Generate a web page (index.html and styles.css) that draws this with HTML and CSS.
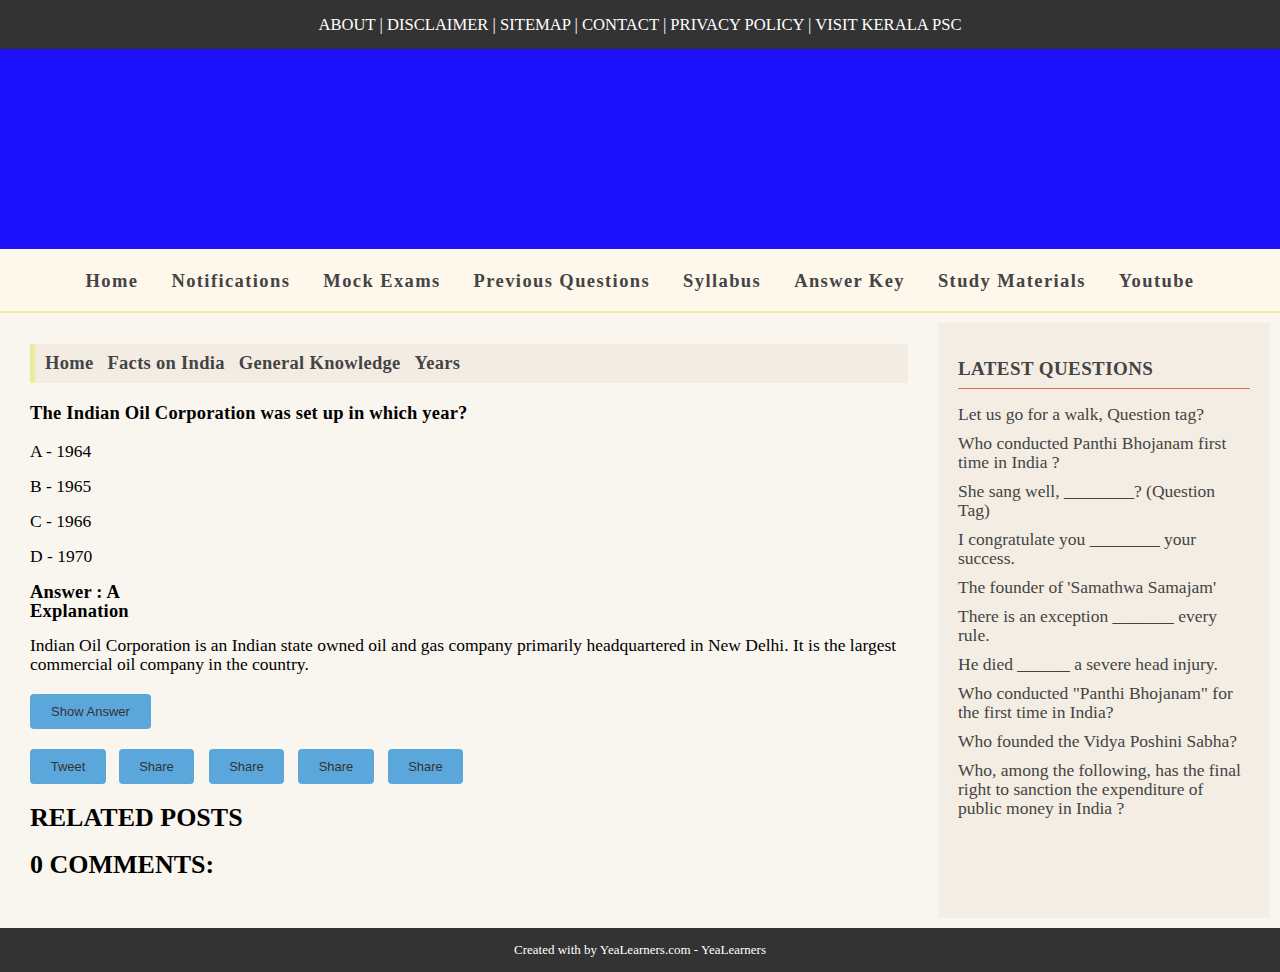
FILE: index.html
```html
<!DOCTYPE html>
<html lang="en">
<head>
<meta charset="utf-8">
<title>The Indian Oil Corporation was set up in which year?</title>
<link rel="stylesheet" href="styles.css">
</head>
<body>
<div class="topbar">
  <a href="#">ABOUT</a> | <a href="#">DISCLAIMER</a> | <a href="#">SITEMAP</a> | <a href="#">CONTACT</a> | <a href="#">PRIVACY POLICY</a> | <a href="#">VISIT KERALA PSC</a>
</div>
<div class="banner"></div>
<nav class="mainnav">
  <a href="#">Home</a>
  <a href="#">Notifications</a>
  <a href="#">Mock Exams</a>
  <a href="#">Previous Questions</a>
  <a href="#">Syllabus</a>
  <a href="#">Answer Key</a>
  <a href="#">Study Materials</a>
  <a href="#">Youtube</a>
</nav>
<div class="page">
  <main class="content">
    <div class="crumbs">
      <a href="#">Home</a>
      <a href="#">Facts on India</a>
      <a href="#">General Knowledge</a>
      <a href="#">Years</a>
    </div>
    <p class="question">The Indian Oil Corporation was set up in which year?</p>
    <p class="opt">A - 1964</p>
    <p class="opt">B - 1965</p>
    <p class="opt">C - 1966</p>
    <p class="opt">D - 1970</p>
    <div class="answer">Answer : A<br>Explanation</div>
    <p class="explain">Indian Oil Corporation is an Indian state owned oil and gas company primarily headquartered in New Delhi. It is the largest commercial oil company in the country.</p>
    <div class="btnrow"><button class="btn btn-show">Show Answer</button></div>
    <div class="btnrow share">
      <button class="btn">Tweet</button>
      <button class="btn">Share</button>
      <button class="btn">Share</button>
      <button class="btn">Share</button>
      <button class="btn">Share</button>
    </div>
    <h2 class="h2">RELATED POSTS</h2>
    <h2 class="h2">0 COMMENTS:</h2>
  </main>
  <aside class="sidebar">
    <h3 class="side-title">LATEST QUESTIONS</h3>
    <ul class="qlist">
      <li>Let us go for a walk, Question tag?</li>
      <li>Who conducted Panthi Bhojanam first time in India ?</li>
      <li>She sang well, ________? (Question Tag)</li>
      <li>I congratulate you ________ your success.</li>
      <li>The founder of 'Samathwa Samajam'</li>
      <li>There is an exception _______ every rule.</li>
      <li>He died ______ a severe head injury.</li>
      <li>Who conducted "Panthi Bhojanam" for the first time in India?</li>
      <li>Who founded the Vidya Poshini Sabha?</li>
      <li>Who, among the following, has the final right to sanction the expenditure of public money in India ?</li>
    </ul>
  </aside>
</div>
<footer class="footer">Created with by YeaLearners.com - YeaLearners</footer>
</body>
</html>
```

FILE: styles.css
```css
* { box-sizing: border-box; }
html, body { margin: 0; padding: 0; }
body {
  background: #f9f5ef;
  font-family: "Liberation Serif", "Times New Roman", serif;
  font-size: 17.5px;
  color: #000;
}
a { text-decoration: none; color: inherit; }

.topbar {
  height: 49px;
  background: #333333;
  color: #fff;
  text-align: center;
  font-size: 16.6px;
  line-height: 49px;
}
.topbar a { color: #fff; }

.banner {
  height: 200px;
  background: #1d10fa;
}

.mainnav {
  height: 64px;
  background: #fdf7ec;
  border-bottom: 2px solid #ebeda0;
  display: flex;
  justify-content: center;
  align-items: center;
  gap: 33px;
  padding: 3px 0 0 0;
}
.mainnav a {
  font-weight: bold;
  font-size: 18.5px;
  letter-spacing: 1.4px;
  color: #444;
}

.page {
  display: flex;
  align-items: flex-start;
  padding: 10px 10px 10px 30px;
  gap: 30px;
}
.content {
  width: 878px;
  padding-top: 21px;
}
.crumbs {
  height: 39px;
  background: #f3ece3;
  border-left: 5px solid #ebeb9c;
  display: flex;
  align-items: center;
  gap: 14px;
  padding-left: 10px;
}
.crumbs a {
  font-weight: bold;
  color: #444;
  font-size: 18.5px;
  letter-spacing: 0.3px;
}
.question {
  font-weight: bold;
  font-size: 18.5px;
  letter-spacing: 0.2px;
  margin: 20px 0 0;
  line-height: 20px;
}
.opt {
  margin: 19px 0 0;
  line-height: 16px;
}
.question + .opt { margin-top: 20px; }
.answer {
  font-weight: bold;
  font-size: 18.5px;
  letter-spacing: 0.2px;
  margin-top: 19px;
  line-height: 19px;
}
.explain {
  margin: 15px 0 0;
  line-height: 19px;
}
.btnrow {
  display: flex;
  gap: 13px;
  margin-top: 20px;
}
.btn {
  height: 35px;
  border: none;
  border-radius: 4px;
  background: #5ba7dc;
  color: #333;
  font-family: "Liberation Sans", Arial, sans-serif;
  font-size: 13px;
  padding: 0;
  width: 76px;
}
.btn-show { width: 121px; }
.share .btn:nth-child(2), .share .btn:nth-child(3), .share .btn:nth-child(5) { width: 75px; }
.share .btn:nth-child(3) { margin-left: 2px; }
.share .btn:nth-child(4), .share .btn:nth-child(5) { margin-left: 1px; }
.h2 {
  font-size: 26px;
  font-weight: bold;
  margin: 19px 0 0;
  line-height: 30px;
}
.h2 + .h2 { margin-top: 17px; }

.sidebar {
  width: 332px;
  height: 595px;
  background: #f3ede3;
  padding: 35px 20px 20px;
}
.side-title {
  margin: 0;
  font-size: 19px;
  letter-spacing: 0.4px;
  font-weight: bold;
  color: #444;
  padding-bottom: 8px;
  border-bottom: 1px solid #e76b48;
  line-height: 22px;
}
.qlist {
  list-style: none;
  margin: 16px 0 0;
  padding: 0;
}
.qlist li {
  font-size: 17.5px;
  color: #444;
  line-height: 19px;
  margin-bottom: 10px;
}

.footer {
  height: 44px;
  background: #333;
  color: #fff;
  text-align: center;
  font-size: 13px;
  line-height: 44px;
}
```
